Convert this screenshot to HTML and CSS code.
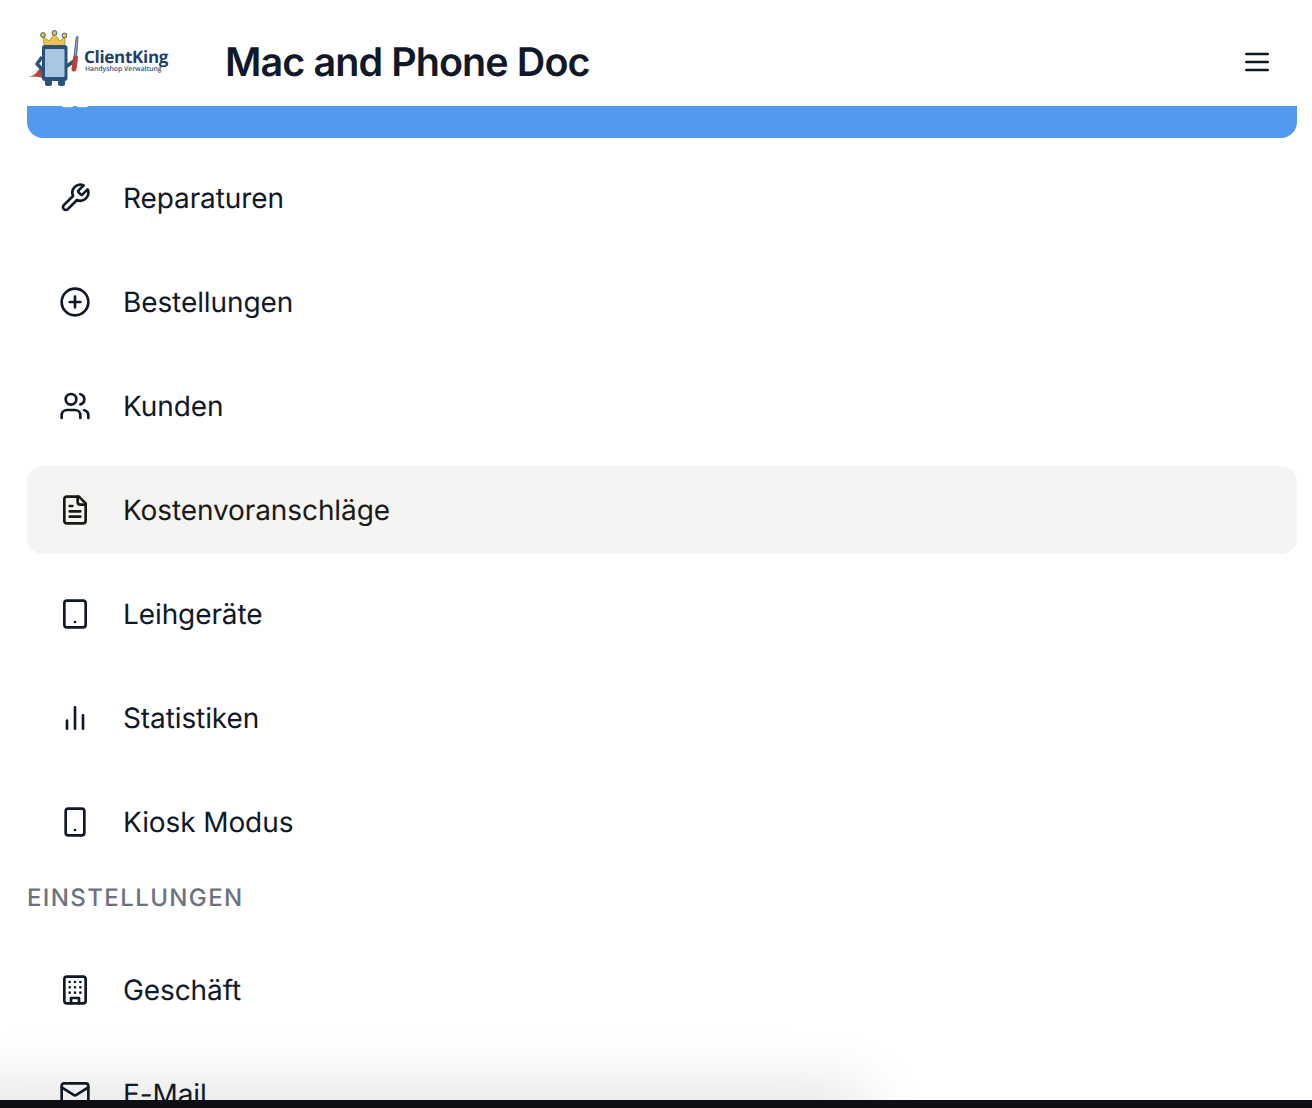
FILE: index.html
```html
<!DOCTYPE html>
<html lang="de">
<head>
    <meta charset="UTF-8">
    <title>Mac and Phone Doc</title>
    <link rel="stylesheet" href="styles.css">
</head>
<body>
    <header class="topbar">
        <svg class="logo" viewBox="27 30 146 60" width="146" height="60">
            <path d="M28 77 C34 76 38 72 41 66 L47 80 C40 76 34 76 28 77Z" fill="#b8413a"/>
            <path d="M42 57 L37 64 L43 70" fill="none" stroke="#2b5379" stroke-width="3.500" stroke-linejoin="round"/>
            <path d="M67 66 L74 61" fill="none" stroke="#2b5379" stroke-width="3.500" stroke-linecap="round"/>
            <rect x="45" y="78" width="7" height="8" rx="2" fill="#2b5379"/>
            <rect x="58" y="78" width="7" height="8" rx="2" fill="#2b5379"/>
            <path d="M44 46 L43 36 L49 41 L54.500 34 L60 41 L65 36 L65 46Z" fill="#eebf4b" stroke="#8a6d2a" stroke-width=".6"/>
            <circle cx="43" cy="35" r="2.400" fill="#eebf4b" stroke="#2b5379" stroke-width=".9"/>
            <circle cx="54.500" cy="33" r="2.400" fill="#eebf4b" stroke="#2b5379" stroke-width=".9"/>
            <circle cx="64.500" cy="35.500" r="2.400" fill="#eebf4b" stroke="#2b5379" stroke-width=".9"/>
            <rect x="42" y="45" width="25.500" height="36" rx="3" fill="#2b5379"/>
            <rect x="45" y="49" width="19.500" height="28" rx="1" fill="#a9c7e2"/>
            <path d="M77.500 36 L78 38 L76.500 57 L74 57 L76 38 Z" fill="#8fa6b8" stroke="#2b5379" stroke-width=".8"/>
            <path d="M75.500 58 L74 69" stroke="#b8413a" stroke-width="5" stroke-linecap="round"/>
            <text class="logo-name" x="84" y="63">ClientKing</text>
            <text class="logo-sub" x="85" y="71">Handyshop Verwaltung</text>
        </svg>
        <h1 class="shop-name">Mac and Phone Doc</h1>
        <button class="menu-btn">
            <svg class="icon" viewBox="0 0 24 24"><path d="M4 6h16M4 12h16M4 18h16"/></svg>
        </button>
    </header>

    <main class="content">
        <nav class="sidenav">
            <a class="nav-item current">
                <svg class="icon" viewBox="0 0 24 24"><rect x="3" y="3" width="7" height="7" rx="1"/><rect x="14" y="3" width="7" height="7" rx="1"/><rect x="3" y="14" width="7" height="7" rx="1"/><rect x="14" y="14" width="7" height="7" rx="1"/></svg>
            </a>
            <a class="nav-item">
                <svg class="icon" viewBox="0 0 24 24"><path d="M14.700 6.300a1 1 0 0 0 0 1.400l1.600 1.600a1 1 0 0 0 1.400 0l3.770-3.770a6 6 0 0 1-7.940 7.940l-6.910 6.910a2.120 2.120 0 0 1-3-3l6.910-6.910a6 6 0 0 1 7.940-7.940l-3.760 3.760z"/></svg>
                Reparaturen
            </a>
            <a class="nav-item">
                <svg class="icon" viewBox="0 0 24 24"><circle cx="12" cy="12" r="10"/><path d="M8 12h8M12 8v8"/></svg>
                Bestellungen
            </a>
            <a class="nav-item">
                <svg class="icon" viewBox="0 0 24 24"><path d="M16 21v-2a4 4 0 0 0-4-4H6a4 4 0 0 0-4 4v2"/><circle cx="9" cy="7" r="4"/><path d="M22 21v-2a4 4 0 0 0-3-3.870M16 3.130a4 4 0 0 1 0 7.750"/></svg>
                Kunden
            </a>
            <a class="nav-item hovered">
                <svg class="icon" viewBox="0 0 24 24"><path d="M15 2H6a2 2 0 0 0-2 2v16a2 2 0 0 0 2 2h12a2 2 0 0 0 2-2V7Z"/><path d="M14 2v4a2 2 0 0 0 2 2h4M10 9H8M16 13H8M16 17H8"/></svg>
                Kostenvoranschläge
            </a>
            <a class="nav-item">
                <svg class="icon" viewBox="0 0 24 24"><rect x="4" y="2" width="16" height="20" rx="2"/><path d="M12 18h.01"/></svg>
                Leihgeräte
            </a>
            <a class="nav-item">
                <svg class="icon" viewBox="0 0 24 24"><path d="M18 20V10M12 20V4M6 20v-6"/></svg>
                Statistiken
            </a>
            <a class="nav-item">
                <svg class="icon" viewBox="0 0 24 24"><rect x="5" y="2" width="14" height="20" rx="2"/><path d="M12 18h.01"/></svg>
                Kiosk Modus
            </a>
            <div class="nav-label">EINSTELLUNGEN</div>
            <a class="nav-item">
                <svg class="icon" viewBox="0 0 24 24"><rect x="4" y="2" width="16" height="20" rx="2"/><path d="M9 22v-4h6v4M8 6h.01M16 6h.01M12 6h.01M12 10h.01M12 14h.01M16 10h.01M16 14h.01M8 10h.01M8 14h.01"/></svg>
                Geschäft
            </a>
            <a class="nav-item">
                <svg class="icon" viewBox="0 0 24 24"><rect x="2" y="4" width="20" height="16" rx="2"/><path d="m22 7-8.970 5.700a1.940 1.940 0 0 1-2.060 0L2 7"/></svg>
                E-Mail
            </a>
        </nav>
        <div class="bottom-shade"></div>
    </main>

    <div class="home-bar"></div>
</body>
</html>
```

FILE: styles.css
```css
* {
    box-sizing: border-box;
}

html, body {
    height: 100%;
}

body {
    margin: 0;
    display: flex;
    flex-direction: column;
    overflow: hidden;
    background-color: #ffffff;
    font-family: Inter, "Liberation Sans", sans-serif;
    color: #111827;
    text-rendering: geometricPrecision;
}

/* Top bar */
.topbar {
    height: 106px;
    flex-shrink: 0;
    display: flex;
    align-items: center;
    padding: 17px 39px 0 27px;
    position: relative;
    z-index: 2;
    background-color: #ffffff;
}

.logo {
    flex-shrink: 0;
    margin-right: 52px;
    margin-bottom: 3px;
}

.logo-name {
    font-family: "Open Sans", sans-serif;
    font-size: 17px;
    font-weight: 700;
    letter-spacing: -.3px;
    fill: #1d4168;
}

.logo-sub {
    font-family: "Open Sans", sans-serif;
    font-size: 6.800px;
    font-weight: 600;
    fill: #2b5379;
}

.shop-name {
    flex: 1;
    margin: 0;
    font-size: 39.500px;
    font-weight: 600;
    line-height: 48px;
    letter-spacing: -.92px;
}

.menu-btn {
    padding: 0;
    border: none;
    background: none;
    color: #111827;
    display: flex;
}

.icon {
    width: 32px;
    height: 32px;
    flex-shrink: 0;
    fill: none;
    stroke: currentColor;
    stroke-width: 2;
    stroke-linecap: round;
    stroke-linejoin: round;
}

/* Menu */
.content {
    flex: 1;
    min-height: 0;
    overflow: hidden;
    position: relative;
}

.sidenav {
    display: flex;
    flex-direction: column;
    gap: 16px;
    margin-top: -56px;
    padding: 0 15px 0 27px;
}

.nav-item {
    display: flex;
    flex-shrink: 0;
    align-items: center;
    gap: 32px;
    height: 88px;
    padding: 0 32px;
    border-radius: 16px;
    font-size: 28px;
    font-weight: 430;
    line-height: 40px;
    letter-spacing: -.1px;
    position: relative;
    z-index: 1;
}

.nav-item.current {
    background-color: #5399ef;
    color: #ffffff;
}

.nav-item.hovered {
    background-color: #f4f4f2;
    color: #1c1917;
}

.nav-label {
    margin-bottom: 16px;
    font-size: 24px;
    font-weight: 500;
    line-height: 32px;
    letter-spacing: 1.400px;
    color: #6b7280;
}

.bottom-shade {
    position: absolute;
    left: -60px;
    bottom: -40px;
    width: 920px;
    height: 40px;
    border-radius: 60px;
    box-shadow: 0 0 64px 12px rgba(0, 0, 0, .12);
}

.home-bar {
    height: 8px;
    flex-shrink: 0;
    background-color: #0e0f14;
    position: relative;
    z-index: 2;
}
```
